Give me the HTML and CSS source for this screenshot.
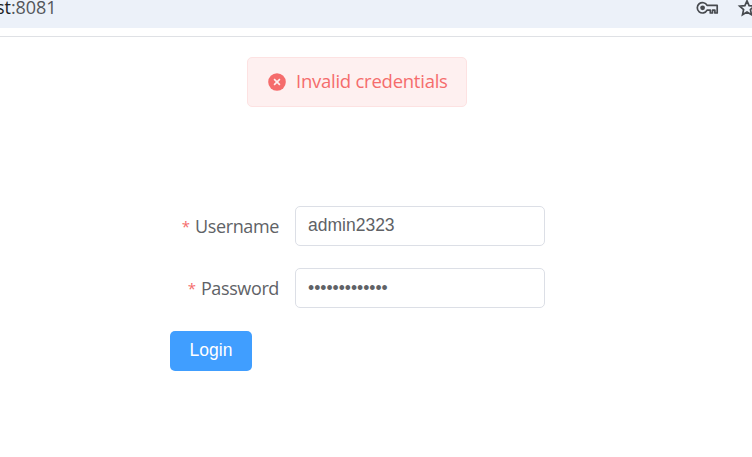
FILE: index.html
```html
<!DOCTYPE html>
<html lang="en">
<head>
<meta charset="utf-8">
<title>Login</title>
<link rel="stylesheet" href="styles.css">
</head>
<body>
<header class="address-bar">
  <div class="url"><span class="host">st</span>:8081</div>
  <div class="actions">
    <svg class="key" width="24" height="16" viewBox="0 0 24 16" fill="none" stroke="#474a4f" stroke-width="1.7">
      <path d="M12.1 5.4H22.2V13H19.9V10.2H17.5V13H15.3V10.2H12.1A5.2 5.2 0 1 1 12.1 5.4Z" stroke-linejoin="round"/>
      <circle cx="7.6" cy="7.8" r="2.4" fill="#474a4f" stroke="none"/>
    </svg>
    <svg class="star" width="20" height="18" viewBox="0 0 20 18" fill="none" stroke="#474a4f" stroke-width="1.7">
      <path d="M10 .8L12.1 5.7L17.3 6.2L13.4 9.6L14.5 14.8L10 12.1L5.5 14.8L6.6 9.6L2.7 6.2L7.9 5.7Z"/>
    </svg>
  </div>
</header>
<div class="toolbar-edge"></div>
<main class="page">
  <div class="message" role="alert">
    <svg width="18" height="18" viewBox="0 0 18 18">
      <circle cx="9" cy="9" r="8.8" fill="#f56c6c"/>
      <path d="M6.1 6.1L11.9 11.9M11.9 6.1L6.1 11.9" stroke="#fef0f0" stroke-width="1.6"/>
    </svg>
    <span class="message-text">Invalid credentials</span>
  </div>
  <form class="login-form">
    <div class="field">
      <label class="label" for="user"><span class="required">*</span><span class="label-text">Username</span></label>
      <input class="input" id="user" type="text" value="admin2323">
    </div>
    <div class="field">
      <label class="label" for="pass"><span class="required">*</span><span class="label-text">Password</span></label>
      <input class="input secret" id="pass" type="password" value="1234567890123">
    </div>
    <button class="button" type="button">Login</button>
  </form>
</main>
</body>
</html>
```
FILE: styles.css
```css
* { box-sizing: border-box; }
body {
  margin: 0;
  height: 457px;
  overflow: hidden;
  background: #fff;
  color: #606266;
  font: 18px/24px "Open Sans", "Noto Sans", sans-serif;
}
.address-bar {
  display: flex;
  justify-content: space-between;
  height: 28px;
  overflow: hidden;
  background: #ecf1f9;
}
.url {
  margin: -5px 0 0 -4px;
  color: #53565b;
  letter-spacing: -0.05px;
}
.host { color: #202124; }
.actions {
  display: flex;
  flex: none;
  gap: 18px;
  margin-right: -5px;
}
.toolbar-edge {
  height: 9px;
  border-bottom: 1px solid #dfe1e5;
}
.message {
  display: flex;
  align-items: center;
  gap: 10px;
  width: 220px;
  height: 50px;
  margin: 20px 0 0 247px;
  padding: 0 0 0 20px;
  border: 1px solid #fde2e2;
  border-radius: 5px;
  background: #fef0f0;
  color: #f56c6c;
  white-space: nowrap;
}
.message svg { flex: none; }
.message-text {
  padding-bottom: 2px;
  font-size: 18.5px;
  letter-spacing: -0.25px;
}
.login-form {
  width: 375px;
  margin: 99px 0 0 170px;
}
.field {
  display: flex;
  height: 40px;
  margin-bottom: 22px;
}
.label {
  display: flex;
  justify-content: flex-end;
  gap: 5px;
  width: 125px;
  padding-right: 16px;
  line-height: 40px;
}
.required { color: #f56c6c; font-size: 15px; }
.label-text { letter-spacing: -0.38px; }
.input {
  width: 250px;
  height: 40px;
  padding: 0 12px 2px;
  border: 1px solid #dcdfe6;
  border-radius: 5px;
  outline: none;
  background: #fff;
  color: #606266;
  font: 17.5px "Liberation Sans", sans-serif;
}
.secret { padding-bottom: 0; }
.button {
  display: block;
  width: 82px;
  height: 40px;
  margin-top: 23px;
  padding: 0 0 2px;
  border: 0;
  border-radius: 5px;
  background: #409eff;
  color: #fff;
  font: 17.5px "Liberation Sans", sans-serif;
}
```
